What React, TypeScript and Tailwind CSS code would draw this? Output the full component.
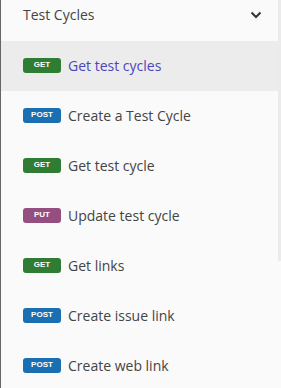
type Method = "GET" | "POST" | "PUT"

const badgeColor: Record<Method, string> = {
  GET: "bg-[#2e7d32]",
  POST: "bg-[#1a6fb3]",
  PUT: "bg-[#944f80]",
}

const items: { method: Method; label: string; active?: boolean }[] = [
  { method: "GET", label: "Get test cycles", active: true },
  { method: "POST", label: "Create a Test Cycle" },
  { method: "GET", label: "Get test cycle" },
  { method: "PUT", label: "Update test cycle" },
  { method: "GET", label: "Get links" },
  { method: "POST", label: "Create issue link" },
  { method: "POST", label: "Create web link" },
]

function Badge({ method }: { method: Method }) {
  return (
    <span
      className={`${badgeColor[method]} w-[38px] h-[15px] rounded-[3px] flex items-center justify-center text-white text-[8px] font-bold leading-none shrink-0 -mt-[2px] font-['Liberation_Sans',sans-serif]`}
    >
      {method}
    </span>
  )
}

export default function App() {
  return (
    <div className="w-[281px] h-[388px] overflow-hidden bg-[#fafafa] border-l border-[#666] flex font-['Open_Sans',sans-serif]">
      <div className="flex-1 flex flex-col">
        <div className="h-[41px] shrink-0 flex items-start justify-between pl-[22px] pr-[16px] pt-[5px]">
          <span className="text-[14px] text-[#444] leading-[20px]">Test Cycles</span>
          <svg width="12" height="8" viewBox="0 0 12 8" className="mt-[6px]">
            <path d="M1.5 1.5 L6 6 L10.5 1.5" fill="none" stroke="#333" strokeWidth="2" />
          </svg>
        </div>
        {items.map((it, i) => (
          <div
            key={i}
            className={`h-[50px] shrink-0 flex items-center gap-[7px] pl-[22px] ${it.active ? "bg-[#ececec]" : ""}`}
          >
            <Badge method={it.method} />
            <span className={`text-[14px] leading-none ${it.active ? "text-[#4b46b8]" : "text-[#444]"}`}>{it.label}</span>
          </div>
        ))}
      </div>
      <div className="w-[3px] flex flex-col">
        <div className="h-[261px] bg-[#ebebeb]" />
      </div>
    </div>
  )
}
